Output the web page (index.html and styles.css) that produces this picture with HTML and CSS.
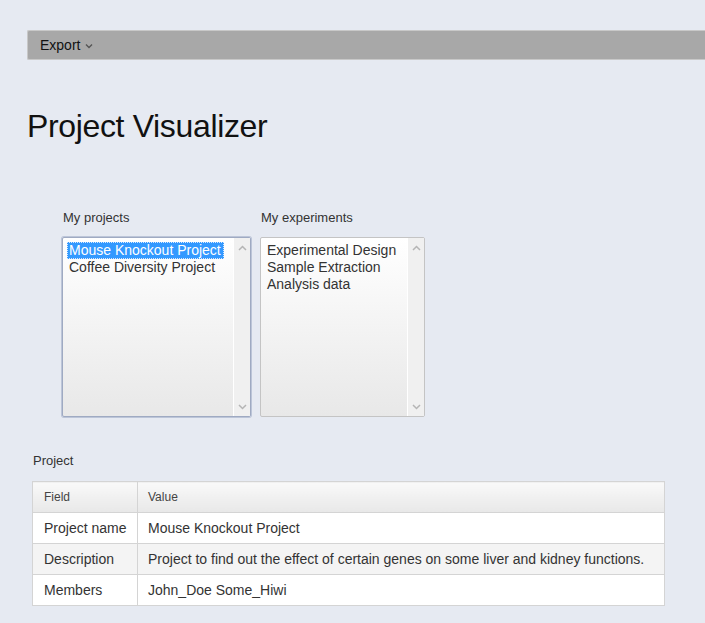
FILE: index.html
```html
<!DOCTYPE html>
<html>
<head>
<meta charset="utf-8">
<link rel="stylesheet" href="styles.css">
</head>
<body>
<div class="toolbar">
  <span class="menu">Export
    <svg class="caret" width="8" height="6" viewBox="0 0 8 6"><path d="M1 1.5 L4 4.5 L7 1.5" fill="none" stroke="#555" stroke-width="1.4"/></svg>
  </span>
</div>

<h1 class="title">Project Visualizer</h1>

<div class="lists">
  <div class="col">
    <div class="label">My projects</div>
    <div class="listbox focused w1">
      <div class="options">
        <div class="opt selected">Mouse Knockout Project</div>
        <div class="opt">Coffee Diversity Project</div>
      </div>
      <div class="scroll">
        <svg width="9" height="6" viewBox="0 0 9 6"><path d="M1 5 L4.5 1.5 L8 5" fill="none" stroke="#b5b5b5" stroke-width="1.5"/></svg>
        <svg width="9" height="6" viewBox="0 0 9 6"><path d="M1 1 L4.5 4.5 L8 1" fill="none" stroke="#b5b5b5" stroke-width="1.5"/></svg>
      </div>
    </div>
  </div>
  <div class="col">
    <div class="label">My experiments</div>
    <div class="listbox w2">
      <div class="options">
        <div class="opt">Experimental Design</div>
        <div class="opt">Sample Extraction</div>
        <div class="opt">Analysis data</div>
      </div>
      <div class="scroll">
        <svg width="9" height="6" viewBox="0 0 9 6"><path d="M1 5 L4.5 1.5 L8 5" fill="none" stroke="#b5b5b5" stroke-width="1.5"/></svg>
        <svg width="9" height="6" viewBox="0 0 9 6"><path d="M1 1 L4.5 4.5 L8 1" fill="none" stroke="#b5b5b5" stroke-width="1.5"/></svg>
      </div>
    </div>
  </div>
</div>

<div class="project">
  <div class="plabel">Project</div>
  <table class="grid">
    <colgroup><col class="c1"><col></colgroup>
    <thead>
      <tr><th>Field</th><th>Value</th></tr>
    </thead>
    <tbody>
      <tr><td>Project name</td><td>Mouse Knockout Project</td></tr>
      <tr class="alt"><td>Description</td><td>Project to find out the effect of certain genes on some liver and kidney functions.</td></tr>
      <tr><td>Members</td><td>John_Doe Some_Hiwi</td></tr>
    </tbody>
  </table>
</div>
</body>
</html>
```

FILE: styles.css
```css
html, body {
  margin: 0;
  padding: 0;
  background: #e6eaf2;
  font-family: "Liberation Sans", Arial, sans-serif;
  color: #333;
}

.toolbar {
  margin: 30px 0 0 27px;
  height: 28px;
  border: 1px solid #c8c8c8;
  border-right: none;
  border-radius: 2px 0 0 2px;
  background: #a8a8a8;
  display: flex;
  align-items: center;
  padding-left: 12px;
}

.menu {
  font-size: 14px;
  color: #111;
  display: flex;
  align-items: center;
  gap: 5px;
}

.caret {
  margin-top: 2px;
}

.title {
  margin: 48px 0 0 27px;
  font-size: 32px;
  line-height: 37px;
  letter-spacing: -0.35px;
  font-weight: normal;
  color: #111;
}

.lists {
  display: flex;
  gap: 9px;
  margin: 65px 0 0 62px;
}

.col {
  display: flex;
  flex-direction: column;
}

.label {
  font-size: 13px;
  line-height: 15px;
  padding-left: 1px;
  margin-bottom: 12px;
  color: #333;
}

.listbox {
  display: flex;
  height: 178px;
  border: 1px solid #c4c4c4;
  border-radius: 2px;
  background: linear-gradient(#ffffff, #e8e8e8);
}

.listbox.focused {
  border-color: #9faac2;
  box-shadow: 0 0 0 1px #bcc5d8;
}

.w1 { width: 187px; }
.w2 { width: 163px; }

.options {
  flex: 1;
  padding: 4px;
}

.opt {
  width: max-content;
  padding: 0 3px 0 2px;
  font-size: 14px;
  line-height: 17px;
  color: #333;
}

.opt.selected {
  background: #3399ff;
  color: #fff;
  outline: 1px dotted #d6e8ff;
  outline-offset: -1px;
}

.scroll {
  width: 16px;
  border-left: 1px solid #ffffff;
  background: #f0f0f0;
  display: flex;
  flex-direction: column;
  justify-content: space-between;
  align-items: center;
  padding: 7px 0 6px;
}

.project {
  margin: 36px 0 0 32px;
}

.plabel {
  font-size: 13px;
  line-height: 15px;
  padding-left: 1px;
  margin-bottom: 13px;
  color: #333;
}

.grid {
  border-collapse: collapse;
  table-layout: fixed;
  width: 633px;
  background: #fff;
}

.grid .c1 { width: 105px; }

.grid th, .grid td {
  border: 1px solid #d4d4d4;
  height: 30px;
  padding: 0 10px 0 11px;
  text-align: left;
  white-space: nowrap;
}

.grid th + th, .grid td + td {
  padding-left: 10px;
}

.grid th {
  font-size: 12px;
  font-weight: normal;
  color: #444;
  background: linear-gradient(#f9f9f9, #e8e8e8);
}

.grid td {
  font-size: 14px;
  color: #333;
}

.grid tr.alt td {
  background: #f4f4f4;
}
```
